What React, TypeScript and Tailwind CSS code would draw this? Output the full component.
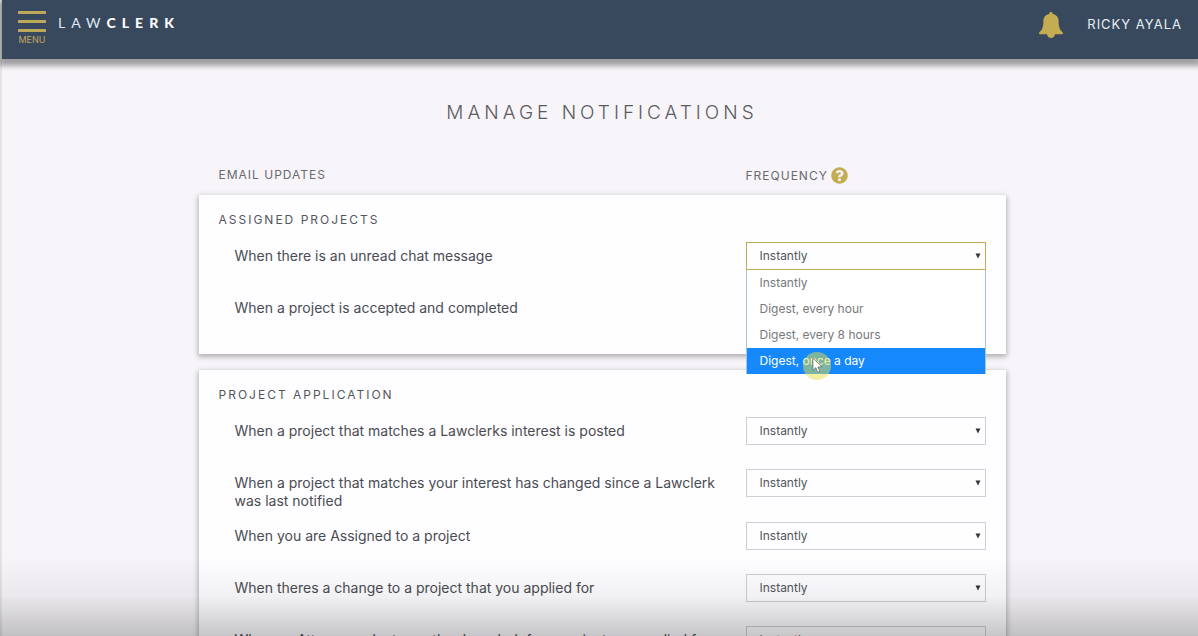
import { useState } from 'react';
import { FaQuestionCircle } from 'react-icons/fa';

const frequencies = ['Instantly', 'Digest, every hour', 'Digest, every 8 hours', 'Digest, once a day'];

const sections = [
  {
    title: 'Assigned Projects',
    rows: [
      'When there is an unread chat message',
      'When a project is accepted and completed',
    ],
  },
  {
    title: 'Project Application',
    rows: [
      'When a project that matches a Lawclerks interest is posted',
      'When a project that matches your interest has changed since a Lawclerk was last notified',
      'When you are Assigned to a project',
      'When theres a change to a project that you applied for',
      'When an Attorney selects another Lawclerk for a project you applied for',
    ],
  },
];

function BellIcon() {
  return (
    <svg className="h-[26px] w-6" viewBox="0 0 24 26" fill="#c4ac52" aria-hidden="true">
      <path d="M12 0c1 0 1.6.7 1.6 1.7 3.7.8 6 3.6 6 7.300 0 6.200 1.200 8.700 3.900 11.200.9.900.5 2.100-.8 2.100H16c-.3 2.200-1.900 3.700-4 3.700s-3.700-1.500-4-3.700H1.300C0 22.300-.4 21.100.5 20.200 3.200 17.700 4.400 15.200 4.400 9c0-3.700 2.300-6.500 6-7.300C10.400.7 11 0 12 0z" />
    </svg>
  );
}

interface FrequencySelectProps {
  id: string;
  open?: boolean;
}

function FrequencySelect({ id, open = false }: FrequencySelectProps) {
  const [value, setValue] = useState(frequencies[0]);

  return (
    <div className="relative self-start">
      <select
        id={id}
        value={value}
        onChange={(e) => setValue(e.target.value)}
        className={`block h-7 w-full appearance-none border bg-[#fefdff] pr-6 pl-[13px] text-xs text-[#55565a] outline-none ${
          open ? 'border-[#c4ac52]' : 'border-[#cfced4]'
        }`}
      >
        {frequencies.map((f) => (
          <option key={f}>{f}</option>
        ))}
      </select>
      <svg className="pointer-events-none absolute top-[11px] right-[5px] h-[6px] w-[6px]" viewBox="0 0 6 6">
        <path d="M.5.5h5L3 5.500z" fill="#333" />
      </svg>
      {open && (
        <ul className="absolute top-full left-0 z-10 w-full border-x border-[#a9c3dd] bg-white">
          {frequencies.map((f, i) => (
            <li key={f}>
              <button
                type="button"
                onClick={() => setValue(f)}
                className={`block h-[26px] w-full px-[13px] text-left text-xs ${
                  i === 3 ? 'bg-[#1589fb] text-white' : 'text-[#77787c]'
                }`}
              >
                {f}
              </button>
            </li>
          ))}
          <li aria-hidden="true" className="absolute -bottom-1.5 left-14 size-7 rounded-full bg-[#e6e04a]/50">
            <svg className="absolute top-[5px] left-[9px] h-[17px] w-[11px]" viewBox="0 0 11 17">
              <path
                d="M1 1v12.2l2.800-2.600 1.800 4.600 2.200-.9-1.900-4.400h3.900z"
                fill="#fff"
                stroke="#555"
                strokeWidth=".6"
              />
            </svg>
          </li>
        </ul>
      )}
    </div>
  );
}

export default function App() {
  return (
    <div className="min-h-screen border-l-2 border-[#e4e3e3] bg-[#f7f5f9] font-['Inter',sans-serif] text-[#4a4c52]">
      <header className="flex h-[59px] items-start justify-between bg-[#38495e] px-4 shadow-[0_4px_5px_3px_rgba(0,0,0,0.35)]">
        <div className="flex items-start gap-3 pt-[11px]">
          <button type="button" className="flex w-7 flex-col items-center text-[#c0a85a]">
            <span className="flex w-full flex-col gap-[6px]">
              <span className="h-[3px] bg-[#c0a85a]" />
              <span className="h-[3px] bg-[#c0a85a]" />
              <span className="h-[3px] bg-[#c0a85a]" />
            </span>
            <span className="text-[9px] leading-4">MENU</span>
          </button>
          <a href="#" className="pt-1 font-['Lato',sans-serif] text-sm leading-4 tracking-[6px] text-[#dfe8f2]">
            LAW<span className="font-black text-white">CLERK</span>
          </a>
        </div>
        <div className="flex items-center gap-6 pt-3">
          <BellIcon />
          <a href="#" className="text-[13px] tracking-[1px] text-[#e6edf5]">
            RICKY AYALA
          </a>
        </div>
      </header>

      <div className="pl-1">
        <main className="mx-auto max-w-[807px] pt-10">
          <h1 className="text-center text-[19px] leading-7 font-light tracking-[4px] text-[#5b5b5f] uppercase">
            Manage Notifications
          </h1>
          <div className="mt-10 grid grid-cols-[1fr_260px] pl-5 text-xs leading-4 tracking-[1px] text-[#6a6a6e] uppercase">
            <h2>Email Updates</h2>
            <h2 className="flex items-center gap-[3px]">
              Frequency
              <FaQuestionCircle className="size-[17px] text-[#c4ac52]" />
            </h2>
          </div>

          <div className="mt-[11px] flex flex-col gap-4">
            {sections.map((section, s) => (
              <section
                key={section.title}
                className="bg-[#fefdff] pt-[17px] pr-5 pb-2 pl-5 shadow-[0_2px_5px_1px_rgba(0,0,0,0.28)]"
              >
                <h3 className="text-xs leading-4 tracking-[2px] text-[#55565a] uppercase">{section.title}</h3>
                <div className="mt-[14px]">
                  {section.rows.map((row, r) => (
                    <div key={row} className="grid min-h-[52px] grid-cols-[1fr_240px] gap-4 pl-4">
                      <label htmlFor={`freq-${s}-${r}`} className="pt-[5px] pb-3 text-sm leading-[18px]">
                        {row}
                      </label>
                      <FrequencySelect id={`freq-${s}-${r}`} open={s === 0 && r === 0} />
                    </div>
                  ))}
                </div>
              </section>
            ))}
          </div>
        </main>
      </div>

      <div className="pointer-events-none fixed inset-x-0 bottom-0 h-20 bg-linear-to-t from-black/22 via-black/5 to-transparent" />
    </div>
  );
}
